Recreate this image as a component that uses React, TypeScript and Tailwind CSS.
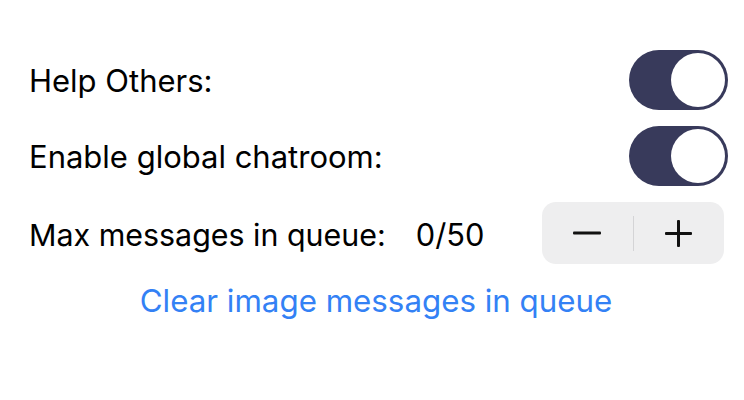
import React from "react";

function Toggle() {
  return (
    <div className="w-[99px] h-[60px] rounded-full bg-[#383a5b] flex items-center justify-end p-[3px]">
      <div className="w-[54px] h-[54px] rounded-full bg-white" />
    </div>
  );
}

export default function App() {
  return (
    <div
      className="w-[744px] h-[400px] bg-white text-black"
      style={{ fontFamily: "Inter, 'Noto Sans', sans-serif" }}
    >
      <div className="pt-[50px] pl-[29px] pr-[16px] flex flex-col gap-[16px]">
        <div className="flex items-center justify-between h-[60px]">
          <span className="text-[31px] leading-none">Help Others:</span>
          <Toggle />
        </div>
        <div className="flex items-center justify-between h-[60px]">
          <span className="text-[31px] leading-none">Enable global chatroom:</span>
          <Toggle />
        </div>
        <div className="flex items-center justify-between h-[62px]">
          <div className="flex items-center gap-[30px] pt-[4px]">
            <span className="text-[30.4px] leading-none">Max messages in queue:</span>
            <span className="text-[30.8px] leading-none">0/50</span>
          </div>
          <div className="w-[182px] h-[62px] mr-[4px] rounded-[14px] bg-[#eeeeef] flex items-center">
            <div className="flex-1 flex items-center justify-center">
              <svg width="28" height="4" viewBox="0 0 28 4">
                <rect x="0" y="0.5" width="28" height="3" rx="1" fill="#111" />
              </svg>
            </div>
            <div className="w-px h-[35px] bg-[#d4d4d6]" />
            <div className="flex-1 flex items-center justify-center">
              <svg width="27" height="27" viewBox="0 0 27 27">
                <rect x="0" y="12" width="27" height="3" rx="1" fill="#111" />
                <rect x="12" y="0" width="3" height="27" rx="1" fill="#111" />
              </svg>
            </div>
          </div>
        </div>
      </div>
      <div className="flex justify-center mt-[22px] pl-[8px]">
        <span className="text-[31.3px] leading-none text-[#3381f5]">
          Clear image messages in queue
        </span>
      </div>
    </div>
  );
}
